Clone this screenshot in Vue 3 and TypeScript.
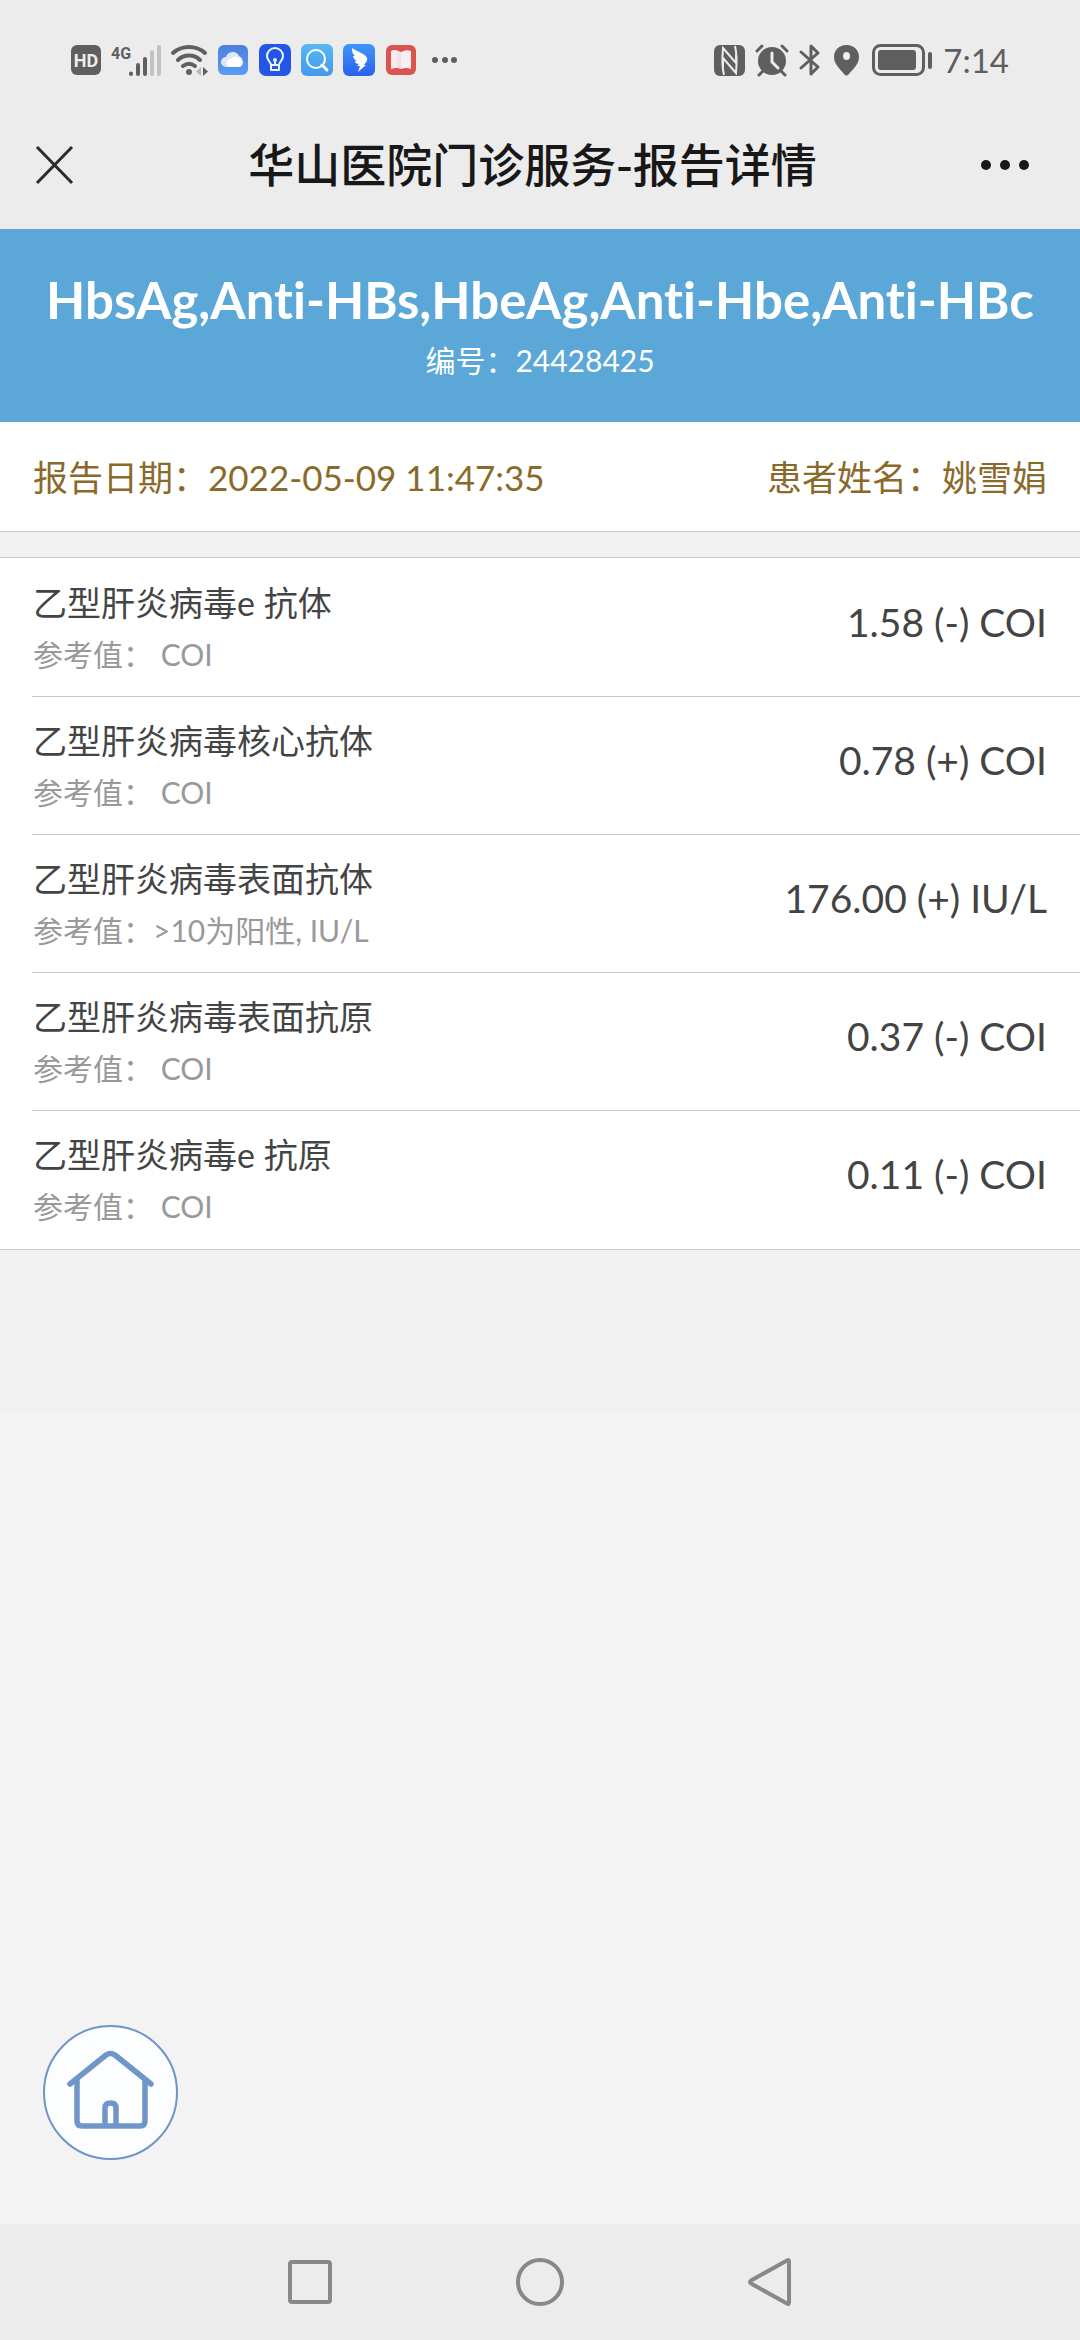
<script setup lang="ts">
interface ResultItem {
  name: string
  reference: string
  value: string
}

const results: ResultItem[] = [
  { name: '乙型肝炎病毒e 抗体', reference: '\u00a0COI', value: '1.58 (-) COI' },
  { name: '乙型肝炎病毒核心抗体', reference: '\u00a0COI', value: '0.78 (+) COI' },
  { name: '乙型肝炎病毒表面抗体', reference: '>10为阳性, IU/L', value: '176.00 (+) IU/L' },
  { name: '乙型肝炎病毒表面抗原', reference: '\u00a0COI', value: '0.37 (-) COI' },
  { name: '乙型肝炎病毒e 抗原', reference: '\u00a0COI', value: '0.11 (-) COI' },
]
</script>

<template>
  <div class="screen">
    <div class="status-bar">
      <div class="status-group">
        <svg width="30" height="30" viewBox="0 0 30 30">
          <rect width="30" height="30" rx="6" fill="#5f5f5f" />
          <text x="15" y="22" text-anchor="middle" font-family="Roboto, sans-serif" font-size="18" font-weight="700" fill="#ececec">HD</text>
        </svg>
        <svg width="50" height="34" viewBox="0 0 50 34">
          <text x="0" y="16" font-family="Roboto, sans-serif" font-size="16" font-weight="700" fill="#5f5f5f">4G</text>
          <g stroke-width="4" stroke-linecap="round">
            <path d="M20 30.500V31M27 22V31M34 16V31" stroke="#5f5f5f" />
            <path d="M41 9V31M48 4V31" stroke="#c2c2c2" />
          </g>
        </svg>
        <svg width="36" height="34" viewBox="0 0 36 34">
          <g fill="none" stroke="#5f5f5f" stroke-width="4" stroke-linecap="round">
            <path d="M2 10C11 2 25 2 34 10" />
            <path d="M7 17C13 11 23 11 29 17" />
            <path d="M12 23C16 20 20 20 24 23" />
          </g>
          <circle cx="18" cy="29" r="3" fill="#5f5f5f" />
          <path d="M30 24V33L25 28.500z" fill="#b9b9b9" />
          <path d="M32 24V33L37 28.500z" fill="#5f5f5f" />
        </svg>
        <svg width="32" height="32" viewBox="0 0 32 32">
          <defs>
            <linearGradient id="cloudBack" x1="0" y1="0" x2="0" y2="1">
              <stop offset="0" stop-color="#4a80dc" />
              <stop offset="1" stop-color="#5b9df4" />
            </linearGradient>
          </defs>
          <rect x="1" y="1" width="30" height="30" rx="6" fill="url(#cloudBack)" />
          <path d="M9 23a5 5 0 0 1 0-10 7 7 0 0 1 13-1 6 6 0 0 1 0 11z" fill="#dce9fb" />
          <path d="M14 23a4 4 0 0 1 0-8 6 6 0 0 1 9-1 5 5 0 0 1 0 9z" fill="#fff" />
        </svg>
        <svg width="32" height="32" viewBox="0 0 32 32">
          <rect width="32" height="32" rx="7" fill="#2456e6" />
          <g fill="none" stroke="#e8f6ff" stroke-width="2" stroke-linejoin="round" stroke-linecap="round">
            <path d="M12 21C12 18 8 17 8 12a8 8 0 0 1 16 0C24 17 20 18 20 21z" />
            <path d="M12 21V26H20V21M16 17V21" />
          </g>
          <circle cx="16" cy="16" r="2" fill="#e8f6ff" />
        </svg>
        <svg width="32" height="32" viewBox="0 0 32 32">
          <defs>
            <linearGradient id="searchBack" x1="0" y1="0" x2="0" y2="1">
              <stop offset="0" stop-color="#58b9f3" />
              <stop offset="1" stop-color="#4298ea" />
            </linearGradient>
          </defs>
          <rect width="32" height="32" rx="6" fill="url(#searchBack)" />
          <circle cx="15" cy="15" r="9" fill="none" stroke="#fff" stroke-width="2" />
          <path d="M21 21L26 26" stroke="#fff" stroke-width="3" stroke-linecap="round" />
        </svg>
        <svg width="32" height="32" viewBox="0 0 32 32">
          <defs>
            <linearGradient id="wingBack" x1="0" y1="0" x2="0" y2="1">
              <stop offset="0" stop-color="#3d97fa" />
              <stop offset="1" stop-color="#2a60ee" />
            </linearGradient>
          </defs>
          <rect width="32" height="32" rx="6" fill="url(#wingBack)" />
          <path d="M9 4C14 8 22 9 24 14C25 17 22 19 21 21H23L15 28L17 22H14L16 20C13 20 12 18 12 17H14C11 16 10 13 10 12H12C9 9 9 7 9 4z" fill="#fff" />
        </svg>
        <svg width="32" height="32" viewBox="0 0 32 32">
          <rect x="1" y="1" width="30" height="30" rx="6" fill="#d9534f" />
          <path d="M6 7Q11 5 16 8V25Q11 23 6 25z" fill="#f3dfe8" />
          <path d="M16 8Q21 5 26 7V25Q21 23 16 25z" fill="#fbeef2" />
          <path d="M6 7Q11 5 12 7V23L6 25z" fill="#faeaf0" />
        </svg>
        <svg width="32" height="32" viewBox="0 0 32 32" fill="#5f5f5f">
          <circle cx="8" cy="16" r="3" />
          <circle cx="18" cy="16" r="3" />
          <circle cx="27" cy="16" r="3" />
        </svg>
      </div>

      <div class="status-group right">
        <svg width="31" height="31" viewBox="0 0 31 31">
          <rect width="31" height="31" rx="6" fill="#5f5f5f" />
          <path d="M10 30C8 22 8 14 9 3L22 18V9M21 1C23 9 23 17 22 28L9 13V22" fill="none" stroke="#ececec" stroke-width="2" />
        </svg>
        <svg width="32" height="32" viewBox="0 0 32 32">
          <circle cx="16" cy="17" r="14" fill="#5f5f5f" />
          <path d="M1 7L6 2M31 7L26 2M3 31L7 27M29 31L25 27" stroke="#5f5f5f" stroke-width="3" stroke-linecap="round" />
          <path d="M16 9V18L22 24" fill="none" stroke="#ececec" stroke-width="3" stroke-linecap="round" stroke-linejoin="round" />
        </svg>
        <svg width="22" height="34" viewBox="0 0 22 34">
          <path d="M2 9L19 24L12 31V3L19 10L2 25" fill="none" stroke="#5f5f5f" stroke-width="3" stroke-linecap="round" stroke-linejoin="round" />
        </svg>
        <svg width="29" height="32" viewBox="0 0 29 32">
          <path d="M14.500 1C7 1 2 6 2 13C2 20 8 25 12 30Q14.500 33 17 30C21 25 27 20 27 13C27 6 22 1 14.500 1z" fill="#5f5f5f" />
          <ellipse cx="14.500" cy="12" rx="3.500" ry="4" fill="#ececec" />
        </svg>
        <svg width="60" height="32" viewBox="0 0 60 32">
          <rect x="1.500" y="1.500" width="50" height="29" rx="7" fill="none" stroke="#5f5f5f" stroke-width="3" />
          <rect x="6" y="6" width="38" height="20" rx="3" fill="#5f5f5f" />
          <rect x="56" y="8" width="4" height="17" rx="2" fill="#5f5f5f" />
        </svg>
        <time class="clock">7:14</time>
      </div>
    </div>

    <header class="title-bar">
      <button class="bar-button" type="button" aria-label="关闭">
        <svg width="37" height="38" viewBox="0 0 37 38">
          <path d="M1 1L36 37M36 1L1 37" stroke="#2b2b2b" stroke-width="3" />
        </svg>
      </button>
      <div class="page-title">华山医院门诊服务-报告详情</div>
      <button class="bar-button more" type="button" aria-label="更多">
        <svg width="48" height="10" viewBox="0 0 48 10" fill="#181818">
          <circle cx="5" cy="5" r="5" />
          <circle cx="24" cy="5" r="5" />
          <circle cx="43" cy="5" r="5" />
        </svg>
      </button>
    </header>

    <main class="content">
      <div class="report">
        <section class="banner">
          <h1>HbsAg,Anti-HBs,HbeAg,Anti-Hbe,Anti-HBc</h1>
          <p>编号：24428425</p>
        </section>

        <section class="info">
          <span>报告日期：2022-05-09 11:47:35</span>
          <span>患者姓名：姚雪娟</span>
        </section>

        <ul class="results">
          <li v-for="item in results" :key="item.name">
            <div class="item-text">
              <div class="item-name">{{ item.name }}</div>
              <div class="item-ref">参考值：{{ item.reference }}</div>
            </div>
            <div class="item-value">{{ item.value }}</div>
          </li>
        </ul>
      </div>

      <button class="home" type="button" aria-label="首页">
        <svg width="135" height="135" viewBox="0 0 135 135">
          <circle cx="67.500" cy="67.500" r="66.500" fill="#fcfdfe" stroke="#6f94c8" stroke-width="2" />
          <g fill="none" stroke="#7095c9" stroke-width="5.500" stroke-linecap="round" stroke-linejoin="round">
            <path d="M27 59L63 30Q67.500 27 72 30L108 59" />
            <path d="M34 55V96Q34 101 39 101H97Q102 101 102 96V55" />
            <path d="M62 100V83Q62 78 67.500 78Q73 78 73 83V100" />
          </g>
        </svg>
      </button>
    </main>

    <nav class="system-nav">
      <button type="button" aria-label="最近任务">
        <svg width="48" height="48" viewBox="0 0 48 48" fill="none" stroke="#888" stroke-width="4">
          <rect x="4" y="4" width="40" height="40" rx="2" />
        </svg>
      </button>
      <button type="button" aria-label="主屏幕">
        <svg width="48" height="48" viewBox="0 0 48 48" fill="none" stroke="#888" stroke-width="4">
          <circle cx="24" cy="24" r="22" />
        </svg>
      </button>
      <button type="button" aria-label="返回">
        <svg width="48" height="48" viewBox="0 0 48 48" fill="none" stroke="#888" stroke-width="4" stroke-linejoin="round">
          <path d="M41 2.500Q43 1 43 4V44Q43 47 41 45.500L5 25.500Q3 24 5 22.500z" />
        </svg>
      </button>
    </nav>
  </div>
</template>

<style>
body {
  margin: 0;
  background: #f3f3f3;
}
</style>

<style scoped>
.screen {
  display: flex;
  flex-direction: column;
  min-height: 100vh;
  font-family: Lato, "Noto Sans CJK SC", sans-serif;
  font-variant-ligatures: none;
  color: #444;
}

svg {
  display: block;
  overflow: visible;
}

button {
  padding: 0;
  border: 0;
  background: none;
  cursor: pointer;
}

.status-bar {
  display: flex;
  align-items: center;
  justify-content: space-between;
  height: 120px;
  padding: 0 71px;
  background: #ececec;
}

.status-group {
  display: flex;
  align-items: center;
  gap: 10px;
}

.status-group.right {
  gap: 11px;
}

.clock {
  font-size: 33px;
  line-height: 40px;
  color: #5f5f5f;
}

.title-bar {
  display: grid;
  grid-template-columns: 1fr auto 1fr;
  align-items: center;
  padding: 7px 51px 27px 36px;
  background: #ececec;
}

.bar-button {
  justify-self: start;
}

.bar-button.more {
  justify-self: end;
}

.page-title {
  padding-bottom: 5px;
  font-family: "Noto Sans CJK SC", sans-serif;
  font-size: 46px;
  font-weight: 500;
  line-height: 70px;
  color: #181818;
}

.content {
  position: relative;
  flex: 1;
}

.report {
  padding-bottom: 163px;
  background: #f1f1f1;
}

.banner {
  padding: 36px 0 37px;
  background: #5aa7d8;
  color: #fff;
  text-align: center;
}

.banner h1 {
  margin: 0;
  font-size: 51px;
  font-weight: 700;
  line-height: 70px;
}

.banner p {
  margin: 0;
  font-size: 30px;
  line-height: 50px;
}

.info {
  display: flex;
  justify-content: space-between;
  padding: 30px 33px 29px;
  border-bottom: 1px solid #c8c8c8;
  background: #fff;
  font-size: 35px;
  line-height: 50px;
  color: #8a6a2a;
}

.results {
  margin: 25px 0 0;
  padding: 1px 0 0 32px;
  border-top: 1px solid #c8c8c8;
  border-bottom: 1px solid #c8c8c8;
  background: #fff;
  list-style: none;
}

.results li {
  display: flex;
  justify-content: space-between;
  padding: 19px 33px 16px 1px;
  border-bottom: 1px solid #c8c8c8;
}

.results li:last-child {
  padding-bottom: 17px;
  border-bottom: 0;
}

.item-name {
  font-size: 34px;
  line-height: 50px;
}

.item-ref {
  font-size: 30px;
  line-height: 52px;
  color: #999;
}

.item-value {
  font-size: 39px;
  line-height: 88px;
}

.home {
  position: absolute;
  left: 43px;
  bottom: 64px;
}

.system-nav {
  display: flex;
  justify-content: center;
  padding: 34px 0;
  background: #ececec;
}

.system-nav button {
  display: flex;
  justify-content: center;
  width: 230px;
}
</style>
